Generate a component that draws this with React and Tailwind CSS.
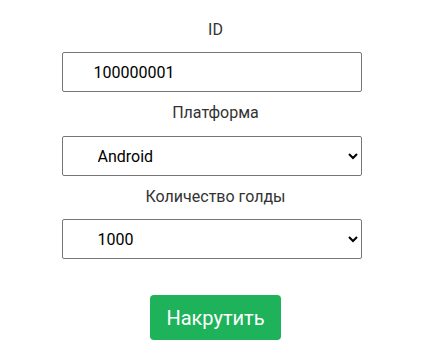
import React, { useState } from "react";

const App = () => {
  const [id, setId] = useState("100000001");
  const [platform, setPlatform] = useState("Android");
  const [gold, setGold] = useState("1000");

  const field =
    "w-[300px] h-10 mr-[5px] border border-[#767676] rounded-[2px] bg-white pl-[31px] pr-2 text-base text-black outline-none";

  return (
    <div
      className="w-full min-h-[352px] bg-white flex flex-col items-center pt-[18px]"
      style={{ fontFamily: "Roboto, 'Noto Sans', sans-serif" }}
    >
      <label className="ml-[3px] h-6 leading-6 text-base text-[#333]">ID</label>
      <input
        className={field + " mt-[10px]"}
        value={id}
        onChange={(e) => setId(e.target.value)}
      />

      <label className="ml-[3px] mt-[9px] h-6 leading-6 text-base text-[#333]">
        Платформа
      </label>
      <select
        className={field + " mt-[11px]"}
        value={platform}
        onChange={(e) => setPlatform(e.target.value)}
      >
        <option>Android</option>
        <option>iOS</option>
      </select>

      <label className="ml-[3px] mt-[9px] h-6 leading-6 text-base text-[#333]">
        Количество голды
      </label>
      <select
        className={field + " mt-[10px]"}
        value={gold}
        onChange={(e) => setGold(e.target.value)}
      >
        <option>1000</option>
        <option>5000</option>
        <option>10000</option>
      </select>

      <button className="ml-[3px] mt-9 h-[45px] px-4 rounded-[4px] bg-[#1eb35b] text-white text-xl">
        Накрутить
      </button>
    </div>
  );
};

export default App;
